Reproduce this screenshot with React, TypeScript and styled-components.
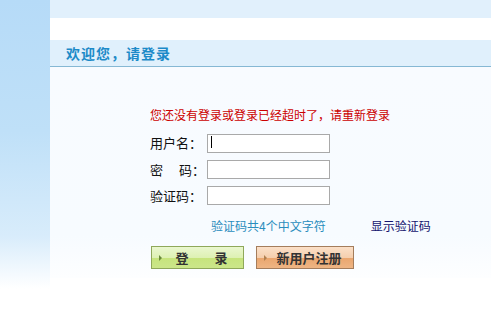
import React, { FC } from "react";
import styled, { createGlobalStyle } from "styled-components";

const GlobalStyle = createGlobalStyle`
  html, body {
    margin: 0;
    padding: 0;
    background: #fff;
  }
  body {
    font-family: "Noto Sans CJK SC", "Liberation Sans", sans-serif;
    font-size: 12px;
    color: #000;
  }
`;

const Page = styled.div`
  display: flex;
  width: 491px;
  height: 328px;
  overflow: hidden;
`;

const Sidebar = styled.div`
  width: 50px;
  flex-shrink: 0;
  background: linear-gradient(to bottom, #b6dbf8 0%, #bfe0f8 40%, #d8ecfb 72%, #ffffff 88%);
`;

const Main = styled.div`
  flex: 1;
  display: flex;
  flex-direction: column;
`;

const TopBand = styled.div`
  height: 18px;
  background: #e1f0fc;
`;

const Header = styled.div`
  margin-top: 22px;
  height: 26px;
  border-bottom: 1px solid #86b8d4;
  background: #e0f0fc;
  display: flex;
  align-items: center;
  padding-left: 16px;
`;

const Title = styled.h1`
  margin: 0;
  font-size: 14px;
  font-weight: 700;
  letter-spacing: 1px;
  color: #1c8ac8;
`;

const Content = styled.div`
  height: 211px;
  background: linear-gradient(to bottom, #f8fbff 0%, #f7fbff 80%, #fdfeff 100%);
  padding: 40px 0 0 100px;
  box-sizing: border-box;
`;

const Notice = styled.p`
  margin: 0 0 10px;
  font-size: 12px;
  line-height: 16px;
  color: #cc0000;
`;

const Fields = styled.div`
  display: grid;
  grid-template-columns: 57px 123px;
  grid-auto-rows: 19px;
  row-gap: 7.5px;
  align-items: center;
`;

const Label = styled.label`
  font-size: 13px;
  line-height: 19px;
  color: #111;
  white-space: pre;
`;

const Input = styled.input`
  box-sizing: border-box;
  width: 123px;
  height: 19px;
  border: 1px solid #a9a9a9;
  background: #fff;
  padding: 0 3px;
  font-size: 12px;
  outline: none;
`;

const Caret = styled.span`
  position: absolute;
  left: 4px;
  top: 3px;
  width: 1px;
  height: 12px;
  background: #000;
`;

const InputWrap = styled.div`
  position: relative;
  width: 123px;
  height: 19px;
`;

const HintRow = styled.div`
  display: flex;
  margin-top: 12px;
  height: 16px;
  align-items: center;
`;

const Hint = styled.span<{ $navy?: boolean }>`
  font-size: 12px;
  color: ${(p) => (p.$navy ? "#14146e" : "#2a8dbd")};
  margin-left: ${(p) => (p.$navy ? "45px" : "61px")};
`;

const Buttons = styled.div`
  display: flex;
  gap: 12px;
  margin-top: 13px;
  margin-left: 1px;
`;

const Button = styled.button<{ $tone: "green" | "orange"; $w: number }>`
  position: relative;
  width: ${(p) => p.$w}px;
  height: 23px;
  padding: 0 0 0 8px;
  box-sizing: border-box;
  font-family: "Noto Sans CJK SC", sans-serif;
  font-size: 13px;
  font-weight: 700;
  color: #333;
  white-space: pre;
  cursor: pointer;
  border: 1px solid ${(p) => (p.$tone === "green" ? "#8fa85a" : "#a47d5c")};
  background: ${(p) =>
    p.$tone === "green"
      ? "linear-gradient(to bottom, #eaf7cf 0%, #def1b4 50%, #c6e47c 52%, #cbe68a 100%)"
      : "linear-gradient(to bottom, #fbe0c8 0%, #f5cfae 50%, #eaa66e 52%, #eeb584 100%)"};
  &::before {
    content: "";
    position: absolute;
    left: 7px;
    top: 8px;
    border-left: 3px solid ${(p) => (p.$tone === "green" ? "#6a8a3a" : "#b08050")};
    border-top: 3px solid transparent;
    border-bottom: 3px solid transparent;
  }
`;

const App: FC = () => {
  return (
    <Page>
      <GlobalStyle />
      <Sidebar />
      <Main>
        <TopBand />
        <Header>
          <Title>欢迎您，请登录</Title>
        </Header>
        <Content>
          <Notice>您还没有登录或登录已经超时了，请重新登录</Notice>
          <Fields>
            <Label>用户名：</Label>
            <InputWrap>
              <Input type="text" />
              <Caret />
            </InputWrap>
            <Label>{"密　 码："}</Label>
            <Input type="password" />
            <Label>验证码：</Label>
            <Input type="text" />
          </Fields>
          <HintRow>
            <Hint>验证码共4个中文字符</Hint>
            <Hint $navy>显示验证码</Hint>
          </HintRow>
          <Buttons>
            <Button $tone="green" $w={93}>{"登　　录"}</Button>
            <Button $tone="orange" $w={98}>新用户注册</Button>
          </Buttons>
        </Content>
      </Main>
    </Page>
  );
};

export default App;
